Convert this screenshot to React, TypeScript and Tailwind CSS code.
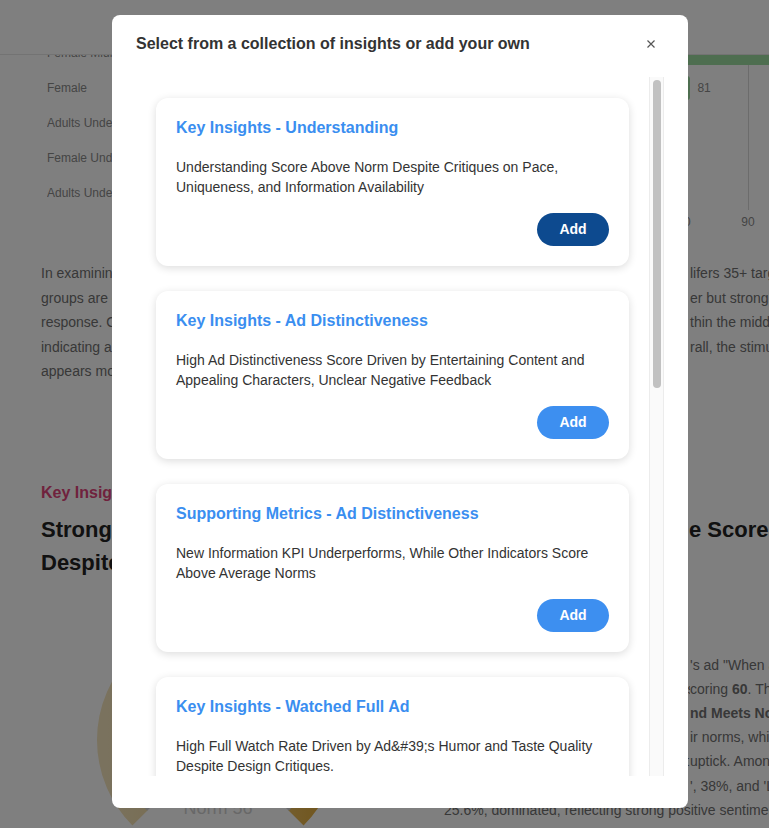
import React from 'react';

const insights = [
  {
    title: 'Key Insights - Understanding',
    body: 'Understanding Score Above Norm Despite Critiques on Pace, Uniqueness, and Information Availability',
    added: true,
  },
  {
    title: 'Key Insights - Ad Distinctiveness',
    body: 'High Ad Distinctiveness Score Driven by Entertaining Content and Appealing Characters, Unclear Negative Feedback',
  },
  {
    title: 'Supporting Metrics - Ad Distinctiveness',
    body: 'New Information KPI Underperforms, While Other Indicators Score Above Average Norms',
  },
  {
    title: 'Key Insights - Watched Full Ad',
    body: 'High Full Watch Rate Driven by Ad&#39;s Humor and Taste Quality Despite Design Critiques.',
  },
  {
    title: 'Key Insights - Brand Linkage',
    body: 'Brand Recall Strong Among Midlifers, Weaker Linkage for Younger Audiences',
  },
  {
    title: 'Supporting Metrics - Brand Linkage',
    body: 'Logo Visibility and Product Shots Support Recognition Above Category Norms',
  },
  {
    title: 'Key Insights - Emotional Response',
    body: 'Positive Sentiment Dominates With Joy and Amusement Leading Reactions',
  },
  {
    title: 'Key Insights - Persuasion',
    body: 'Purchase Intent Meets Norm, Driven by Taste Appeal and Product Familiarity',
  },
];

const rows = [
  { label: 'Female Midlifers 35+', value: 97 },
  { label: 'Female', value: 81 },
  { label: 'Adults Under 35', value: 72 },
  { label: 'Female Under 35', value: 70 },
  { label: 'Adults Under 35 Other', value: 66 },
];

const SCALE = 6.4;
const TICKS = [0, 10, 20, 30, 40, 50, 60, 70, 80, 90, 100];

const para1 = [
  ['In examining the audience response across the demographic segments, the Female Mid', 'lifers 35+ target'],
  ['groups are clearly the most engaged with the stimulus, showing a slightly small', 'er but strong'],
  ['response. Other segments remain broadly in line with the benchmark, wi', 'thin the middle'],
  ['indicating a consistent reaction regardless of age or gender. Ove', 'rall, the stimulus'],
  ['appears most effective with the older female audience.', ''],
];

function InsightCard({ title, body, added }: { title: string; body: string; added?: boolean }) {
  return (
    <div className="rounded-[12px] bg-white p-5 shadow-[0_2px_9px_rgba(0,0,0,0.14)]">
      <h3 className="text-[16px] font-bold leading-[19px] text-[#3a8ef0]">{title}</h3>
      <p className="mt-5 text-[14px] leading-5 text-[#333]">{body}</p>
      <div className="mt-4 flex justify-end">
        <button
          className={`h-[33px] w-[72px] rounded-full text-[14px] font-bold text-white ${
            added ? 'bg-[#0d4a8f]' : 'bg-[#3d8ff0]'
          }`}
        >
          Add
        </button>
      </div>
    </div>
  );
}

function Gauge() {
  return (
    <svg width="380" height="260" viewBox="0 0 380 260">
      <defs>
        <linearGradient id="gaugeFill" x1="0" y1="0" x2="1" y2="0">
          <stop offset="0" stopColor="#f4e4bc" />
          <stop offset="0.6" stopColor="#efcf86" />
          <stop offset="1" stopColor="#e2aa36" />
        </linearGradient>
      </defs>
      <path d="M 99.2 217.8 A 110 110 0 1 1 254.8 217.8" fill="none" stroke="url(#gaugeFill)" strokeWidth="22" />
      <path d="M 109 208 A 96 96 0 1 1 245 208" fill="none" stroke="#d2d2d2" strokeWidth="8" />
      <text x="177" y="120" textAnchor="middle" fontSize="44" fontWeight="700" fill="#333" fontFamily="Liberation Sans, Arial, sans-serif">
        60
      </text>
      <text x="177" y="214" textAnchor="middle" fontSize="18" fill="#d0d0d0" fontFamily="Liberation Sans, Arial, sans-serif">
        Norm 56
      </text>
    </svg>
  );
}

export default function App() {
  return (
    <div className="h-screen w-screen overflow-hidden bg-white font-['Liberation_Sans',Arial,sans-serif]">
      <div className="relative w-[800px]">
        <header className="fixed left-0 top-0 z-10 h-[55px] w-[800px] border-b border-[#e6e6e6] bg-white" />

        <main className="pl-[41px]">
          {/* bar chart */}
          <div className="relative ml-[6px] mt-[35px]">
            <div className="absolute bottom-[24px] left-[125px] top-0">
              {TICKS.map(t => (
                <div
                  key={t}
                  className="absolute top-0 h-full w-px bg-[#d9d9d9]"
                  style={{ left: t * SCALE }}
                />
              ))}
            </div>
            {rows.map(r => (
              <div key={r.label} className="relative flex h-[35px] items-center">
                <div className="w-[125px] shrink-0 truncate text-[12px] text-[#8a8a8a]">{r.label}</div>
                <div className="flex items-center">
                  <div className="h-[24px] rounded-r-[3px] bg-[#9cdca0]" style={{ width: r.value * SCALE }} />
                  <span className="ml-[7px] text-[12px] text-[#8a8a8a]">{r.value}</span>
                </div>
              </div>
            ))}
            <div className="relative ml-[125px] h-[24px]">
              {TICKS.map(t => (
                <span
                  key={t}
                  className="absolute top-1/2 -translate-x-1/2 -translate-y-1/2 text-[12px] text-[#8a8a8a]"
                  style={{ left: t * SCALE }}
                >
                  {t}
                </span>
              ))}
            </div>
          </div>

          {/* summary paragraph */}
          <div className="mt-[27px] text-[14px] leading-[24.5px] text-[#707070]">
            {para1.map(([a, b], i) => (
              <div key={i} className="flex whitespace-nowrap">
                <span className="w-[649px] shrink-0 overflow-hidden">{a}</span>
                <span>{b}</span>
              </div>
            ))}
          </div>

          <div className="mt-[97px] text-[16px] font-bold leading-6 text-[#e0457b]">Key Insights</div>
          <div className="mt-[8px] flex whitespace-nowrap text-[22px] font-bold leading-[33px] text-[#222]">
            <div className="w-[648px] shrink-0 overflow-hidden">
              Strong Appeal and Entertainment Value Driv
              <br />
              Despite Mixed Feedback on Pacing
            </div>
            <div>e Scores</div>
          </div>

          <div className="mt-[21px] flex">
            <div className="w-[403px] shrink-0">
              <Gauge />
            </div>
            <div className="pt-[53px] text-[14px] leading-[24.2px] text-[#707070]">
              <div className="flex whitespace-nowrap">
                <span className="w-[246px] shrink-0 overflow-hidden">In a recent evaluation, Brandi Foods</span>
                <span>'s ad "When a Craving Hits"</span>
              </div>
              <div className="flex whitespace-nowrap">
                <span className="w-[246px] shrink-0 overflow-hidden">performed well overall, with Enjoyment s</span>
                <span>
                  coring <b>60</b>. The
                </span>
              </div>
              <div className="flex whitespace-nowrap">
                <span className="w-[246px] shrink-0 overflow-hidden font-bold">Enjoyment Exceeds Expectations a</span>
                <span className="font-bold">nd Meets Norms</span>
              </div>
              <div className="flex whitespace-nowrap">
                <span className="w-[246px] shrink-0 overflow-hidden">Midlifers and females outperformed the</span>
                <span>ir norms, while</span>
              </div>
              <div className="flex whitespace-nowrap">
                <span className="w-[246px] shrink-0 overflow-hidden">younger viewers showed only a modest </span>
                <span>uptick. Among</span>
              </div>
              <div className="flex whitespace-nowrap">
                <span className="w-[246px] shrink-0 overflow-hidden">emotions, 'Joy', 42%, 'Amusement</span>
                <span>', 38%, and 'Love'</span>
              </div>
              <div className="whitespace-nowrap">25.6%, dominated, reflecting strong positive sentiment towards the ad.</div>
            </div>
          </div>
        </main>

        <div className="fixed inset-0 z-20 bg-black/50" />

        <div className="fixed left-0 top-0 z-30 flex w-[800px] justify-center pt-[15px]">
          <div className="flex h-[793px] w-[576px] flex-col rounded-[8px] bg-white">
            <div className="flex h-[62px] shrink-0 items-start justify-between pl-6 pr-[33px] pt-[19px]">
              <h2 className="text-[16px] font-bold leading-[19px] text-[#333]">
                Select from a collection of insights or add your own
              </h2>
              <button className="mt-[6px] text-[#555]" aria-label="Close">
                <svg width="8" height="8" viewBox="0 0 8 8">
                  <path d="M0.5 0.5 L7.5 7.5 M7.5 0.5 L0.5 7.5" stroke="currentColor" strokeWidth="1.2" />
                </svg>
              </button>
            </div>
            <div className="mx-6 flex h-[699px]">
              <div className="min-w-0 flex-1 overflow-y-auto [scrollbar-width:none]">
                <div className="flex flex-col gap-[25px] px-5 pb-5 pt-[21px]">
                  {insights.map(c => (
                    <InsightCard key={c.title} {...c} />
                  ))}
                </div>
              </div>
              {/* scrollbar */}
              <div className="w-[15px] shrink-0 border-x border-[#ececec] bg-[#fafafa] pl-[3px] pr-[2px] pt-[3px]">
                <div className="h-[308px] rounded-full bg-[#c1c1c1]" />
              </div>
            </div>
          </div>
        </div>
      </div>
    </div>
  );
}
